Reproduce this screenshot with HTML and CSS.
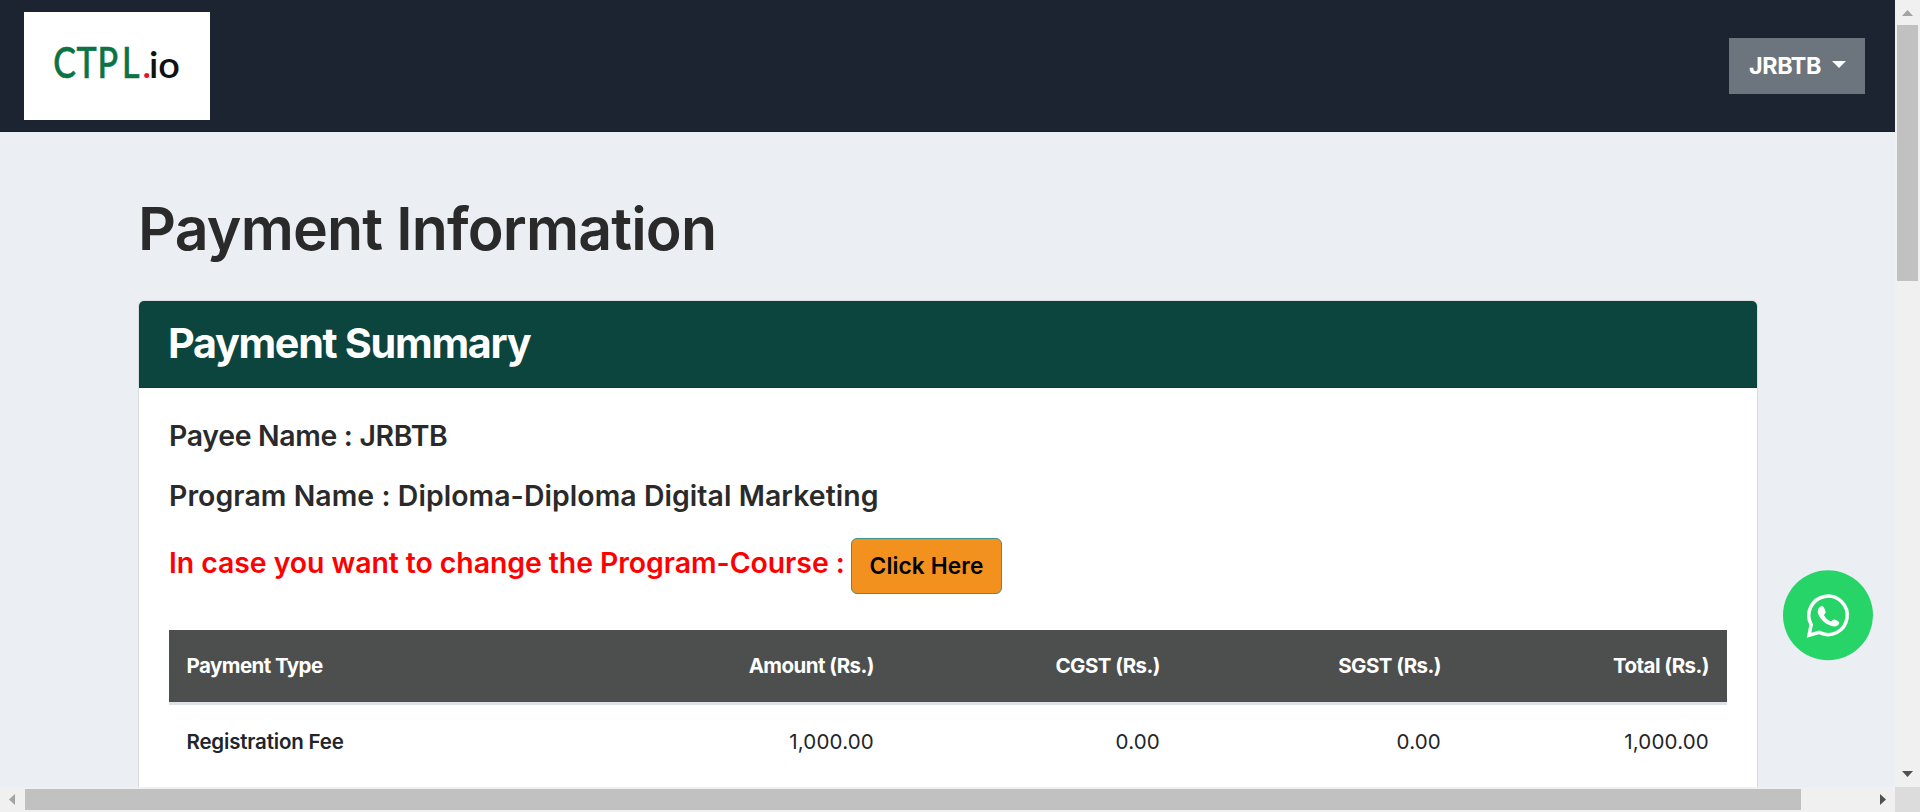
FILE: index.html
```
<!DOCTYPE html>
<html lang="en">
<head>
<meta charset="utf-8">
<title>Payment Information</title>
<link rel="stylesheet" href="styles.css">
</head>
<body>
<div class="window">
  <div class="viewport">
    <header class="navbar">
      <a class="brand" href="#">
        <svg width="186" height="108" viewBox="0 0 186 108" role="img" aria-label="CTPL.io">
          <text class="brand-main" transform="scale(.82 1)" x="35.8 64 89.5 119.5" y="66">CTPL</text>
          <circle cx="122.7" cy="63.6" r="2.5" fill="#f0101c"/>
          <text class="brand-io" x="125" y="66" textLength="31" lengthAdjust="spacingAndGlyphs">io</text>
        </svg>
      </a>
      <button class="user-menu">JRBTB <span class="caret"></span></button>
    </header>
    <main class="container">
      <h1 class="page-title">Payment Information</h1>
      <section class="card">
        <h2 class="card-header">Payment Summary</h2>
        <div class="card-body">
          <p class="line payee">Payee Name : JRBTB</p>
          <p class="line program">Program Name : Diploma-Diploma Digital Marketing</p>
          <div class="change-row">
            <p class="line notice">In case you want to change the Program-Course :</p>
            <a class="btn" href="#">Click Here</a>
          </div>
          <table class="fees">
            <colgroup><col class="c1"><col class="c2"><col class="c3"><col class="c4"><col class="c5"></colgroup>
            <thead>
              <tr><th>Payment Type</th><th>Amount (Rs.)</th><th>CGST (Rs.)</th><th>SGST (Rs.)</th><th>Total (Rs.)</th></tr>
            </thead>
            <tbody>
              <tr><td>Registration Fee</td><td>1,000.00</td><td>0.00</td><td>0.00</td><td>1,000.00</td></tr>
            </tbody>
          </table>
        </div>
      </section>
    </main>
    <a class="whatsapp" href="#" aria-label="WhatsApp">
      <svg width="90" height="91" viewBox="0 0 90 91">
        <circle cx="45" cy="45.3" r="45" fill="#27d468"/>
        <path d="M28.2 54.6A19.2 19.2 0 1 1 36.2 62.4L26 65.2Z" fill="none" stroke="#fff" stroke-width="3.5"/>
        <path d="M36.4 37.2C38 35.8 40.2 35.9 41 37.6L42.5 41.3C42.9 42.5 42.3 43.5 40.9 45C42.6 48.2 44.8 50.2 48.2 51.6C49.6 49.9 50.5 49.1 51.8 49.6L55.2 51.2C56.8 52.2 56.4 54 54.9 55.2C52.2 57.1 49.3 56.5 46 55.1C41 52.9 37.6 49.4 35.5 44.8C34.3 41.9 34.5 39 36.4 37.2Z" fill="#fff"/>
      </svg>
    </a>
  </div>
  <div class="scroll-v">
    <svg width="25" height="25"><path d="M7 16H18L12.5 10Z" fill="#a3a3a3"/></svg>
    <div class="thumb-v"></div>
    <svg class="end" width="25" height="25"><path d="M7 9H18L12.5 15Z" fill="#505050"/></svg>
  </div>
  <div class="scroll-h">
    <svg width="25" height="25"><path d="M15 7V18L9 12.5Z" fill="#a3a3a3"/></svg>
    <div class="thumb-h"></div>
    <svg class="end" width="25" height="25"><path d="M10 7V18L16 12.5Z" fill="#505050"/></svg>
  </div>
  <div class="corner"></div>
</div>
</body>
</html>
```
FILE: styles.css
```
* { box-sizing: border-box; }
body {
  margin: 0;
  font-family: Inter, "Open Sans", sans-serif;
  color: #212529;
}
.window {
  display: grid;
  grid-template: 787px 25px / 1895px 25px;
  height: 812px;
  overflow: hidden;
}
.viewport {
  position: relative;
  background: #ebeff4;
  overflow: hidden;
}
.navbar {
  display: flex;
  align-items: center;
  justify-content: space-between;
  height: 132px;
  padding: 0 30px 0 24px;
  background: #1d2431;
  border-bottom: 1px solid #1c1c30;
}
.brand {
  width: 186px;
  height: 108px;
  background: #fff;
}
.brand svg { display: block; }
.brand-main {
  font: 500 41.5px Lato, sans-serif;
  fill: #0c7344;
  stroke: #0c7344;
  stroke-width: .6px;
}
.brand-io {
  font: 600 37px Lato, sans-serif;
  fill: #111;
}
.user-menu {
  display: flex;
  align-items: center;
  width: 136px;
  height: 56px;
  padding: 0 0 0 20px;
  border: 0;
  background: #6c747d;
  color: #fff;
  font: 700 23.3px Inter, sans-serif;
  letter-spacing: -.38px;
}
.caret {
  margin: -2px 0 0 11px;
  border: 7px solid transparent;
  border-top-color: #fff;
  border-bottom: 0;
}
.container {
  width: 1620px;
  margin-left: 138px;
}
.page-title {
  margin: 0;
  padding: 61px 0 35px;
  font-size: 59px;
  font-weight: 600;
  line-height: 72px;
  letter-spacing: -.84px;
  color: #2a2a2a;
}
.card {
  height: 600px;
  border: 1px solid #dadcdf;
  border-radius: 6px;
  background: #fff;
  overflow: hidden;
}
.card-header {
  margin: 0;
  height: 87px;
  padding: 0 29px;
  background: #0c443e;
  border-bottom: 1px solid #0b3b36;
  color: #fff;
  font-size: 41.3px;
  font-weight: 700;
  line-height: 84px;
  letter-spacing: -1.3px;
}
.card-body { padding: 30px 30px 0; }
.line {
  margin: 0;
  font-size: 28.4px;
  font-weight: 600;
  line-height: 36px;
  color: #2a2a2a;
  white-space: nowrap;
}
.payee { letter-spacing: -.3px; }
.program { margin-top: 24px; letter-spacing: .08px; }
.change-row {
  display: flex;
  align-items: flex-start;
  gap: 7px;
  height: 92px;
  margin-top: 24px;
}
.notice {
  width: 675px;
  padding-top: 7px;
  letter-spacing: -.05px;
  color: #f00;
}
.btn {
  width: 151px;
  height: 56px;
  border: 1px solid #3f9189;
  border-radius: 6px;
  background: #f3911f;
  color: #000;
  font-size: 22.7px;
  font-weight: 600;
  line-height: 54px;
  letter-spacing: .12px;
  text-align: center;
  text-decoration: none;
}
.fees {
  width: 1558px;
  border-collapse: separate;
  border-spacing: 0;
  table-layout: fixed;
  font-size: 20.5px;
}
.c1 { width: 442px; }
.c2 { width: 281px; }
.c3 { width: 286px; }
.c4 { width: 281px; }
.c5 { width: 268px; }
.fees th, .fees td {
  height: 75px;
  padding: 0 18px 2px;
  text-align: right;
}
.fees th {
  border-bottom: 3px solid #dee2e6;
  background: #4d4f4e;
  color: #fff;
  font-weight: 700;
  letter-spacing: -.56px;
}
.fees th:first-child, .fees td:first-child {
  padding-left: 17.5px;
  text-align: left;
}
.fees td { letter-spacing: .2px; }
.fees td:first-child { font-weight: 600; letter-spacing: -.18px; }
.whatsapp {
  position: absolute;
  right: 22px;
  bottom: 126px;
  line-height: 0;
}
.scroll-v, .scroll-h { display: flex; background: #f0f0f0; }
.scroll-v { flex-direction: column; }
.thumb-v { width: 21px; height: 256px; margin-left: 2px; background: #c1c1c1; }
.thumb-h { width: 1776px; height: 21px; margin-top: 2px; background: #c1c1c1; }
.scroll-v .end { margin-top: auto; }
.scroll-h .end { margin-left: auto; }
.corner { background: #dcdcdc; }
```
